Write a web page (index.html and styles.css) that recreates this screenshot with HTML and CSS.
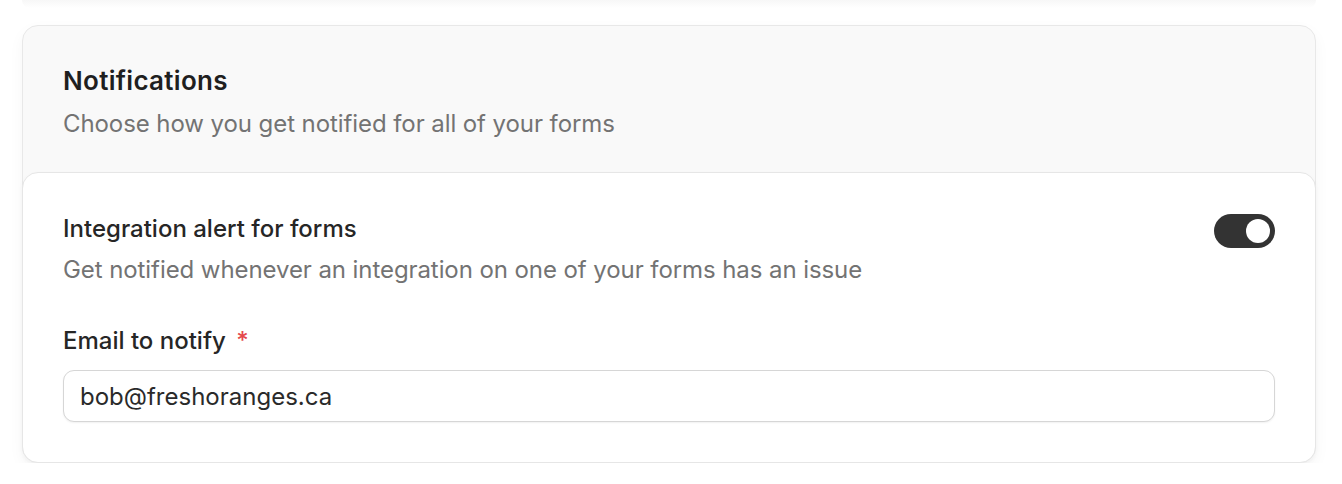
FILE: index.html
```html
<!DOCTYPE html>
<html lang="en">
<head>
<meta charset="utf-8">
<title>Notifications</title>
<link rel="stylesheet" href="styles.css">
</head>
<body>
<div class="prev-shadow"></div>
<section class="card">
  <header class="card-header">
    <h2 class="title">Notifications</h2>
    <p class="subtitle">Choose how you get notified for all of your forms</p>
  </header>
  <div class="card-body">
    <div class="setting-row">
      <div class="setting-text">
        <div class="setting-label">Integration alert for forms</div>
        <div class="setting-desc">Get notified whenever an integration on one of your forms has an issue</div>
      </div>
      <button class="toggle" role="switch" aria-checked="true"><span class="knob"></span></button>
    </div>
    <label class="field">
      <span class="field-label">Email to notify <span class="req">*</span></span>
      <input class="input" type="email" value="bob@freshoranges.ca">
    </label>
  </div>
</section>
</body>
</html>
```
FILE: styles.css
```css
* { box-sizing: border-box; }
html, body { margin: 0; padding: 0; background: #ffffff; }
body {
  font-family: Inter, "Noto Sans", sans-serif;
  color: #262626;
  -webkit-font-smoothing: antialiased;
}
.prev-shadow {
  height: 8px;
  margin: 0 26px 0 22px;
  background: linear-gradient(#f7f7f7, #ffffff);
  border-radius: 0 0 16px 16px;
}
.card {
  margin: 17px 26px 0 22px;
  border: 1px solid #e8e8e8;
  border-radius: 16px;
  background: #f9f9f9;
  box-shadow: 0 6px 16px rgba(0,0,0,0.04);
}
.card-header {
  padding: 38px 40px 32px;
}
.title {
  margin: 0;
  font-size: 26px;
  font-weight: 600;
  letter-spacing: 0.3px;
  line-height: 34px;
  color: #1f1f1f;
}
.subtitle {
  margin: 10px 0 0;
  font-size: 24px;
  line-height: 32px;
  letter-spacing: -0.08px;
  color: #737373;
}
.card-body {
  margin: 0 -1px -1px;
  background: #ffffff;
  border: 1px solid #e6e6e6;
  border-radius: 16px;
  padding: 40px 40px 40px;
  box-shadow: 0 2px 4px rgba(0,0,0,0.04);
}
.setting-row {
  display: flex;
  justify-content: space-between;
  align-items: flex-start;
}
.setting-label {
  font-size: 24px;
  font-weight: 500;
  line-height: 32px;
  color: #262626;
}
.setting-desc {
  margin-top: 9px;
  font-size: 24px;
  line-height: 32px;
  letter-spacing: -0.08px;
  color: #737373;
}
.toggle {
  margin-top: 1px;
  width: 61px;
  height: 34px;
  border: none;
  border-radius: 17px;
  background: #333333;
  padding: 0 5px 0 0;
  display: flex;
  align-items: center;
  justify-content: flex-end;
  cursor: pointer;
}
.knob {
  width: 24px;
  height: 24px;
  border-radius: 50%;
  background: #ffffff;
}
.field {
  display: flex;
  flex-direction: column;
  margin-top: 39px;
}
.field-label {
  font-size: 24px;
  font-weight: 500;
  line-height: 32px;
  color: #262626;
}
.req {
  color: #e5484d;
  margin-left: 4px;
}
.input {
  margin-top: 13px;
  height: 52px;
  border: 1px solid #d6d6d6;
  border-radius: 11px;
  padding: 0 16px;
  font-family: inherit;
  font-size: 24px;
  color: #2a2a2a;
  background: #ffffff;
  box-shadow: 0 1px 2px rgba(0,0,0,0.06);
  outline: none;
}
```
